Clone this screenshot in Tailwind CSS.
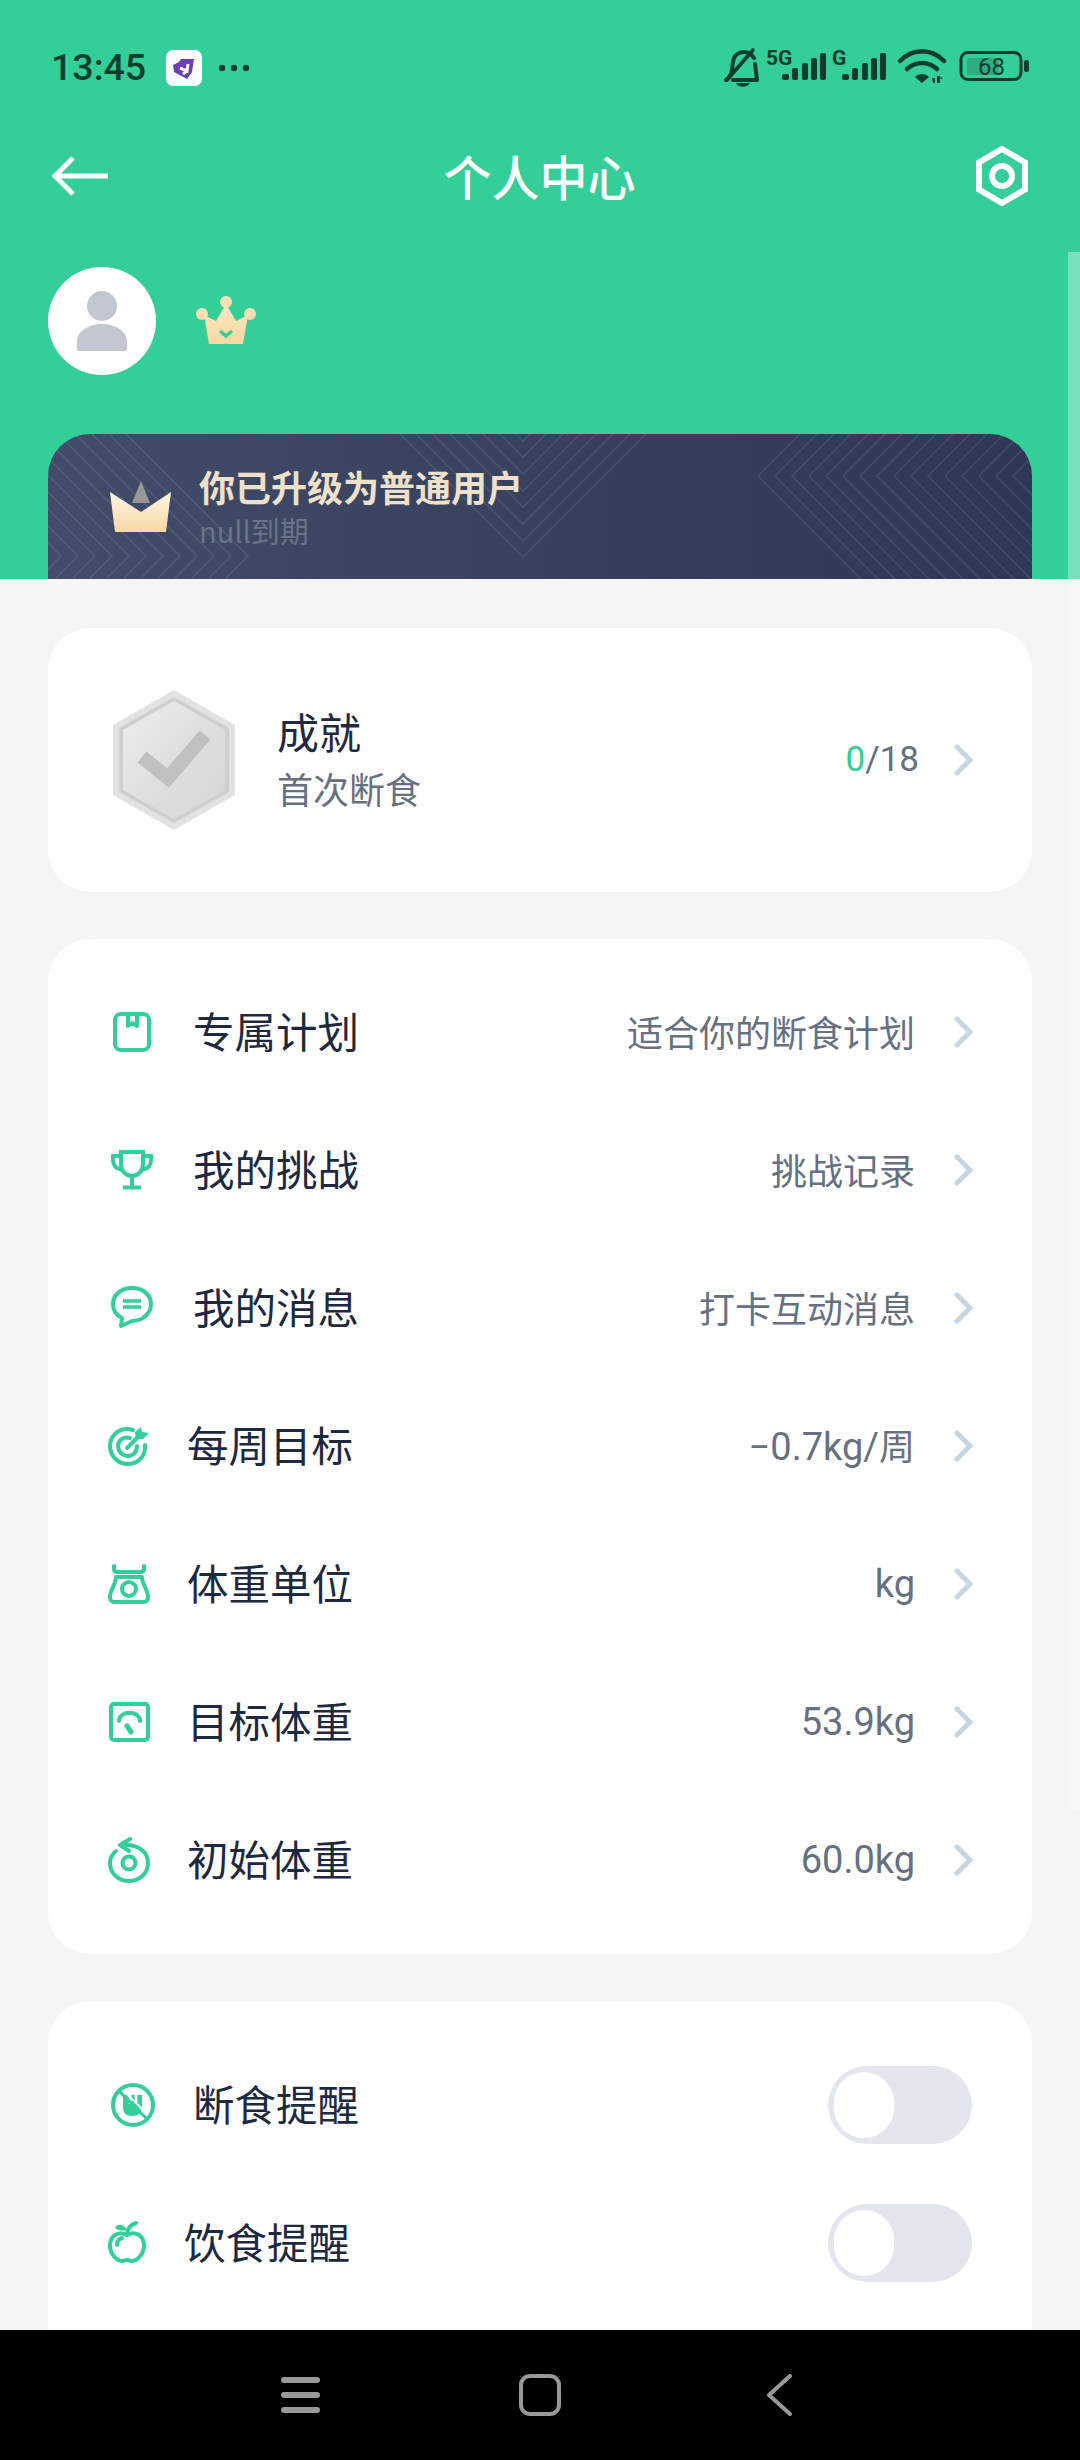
<!DOCTYPE html>
<html><head><meta charset="utf-8"><script src="https://cdn.jsdelivr.net/npm/@tailwindcss/browser@4"></script></head>
<body>
<div class="relative w-[1080px] h-[2460px] overflow-hidden bg-[#f5f5f6] flex flex-col font-['Roboto','Noto_Sans_CJK_SC',sans-serif]">
  <!-- header -->
  <header class="h-[579px] shrink-0 bg-[#34ce99] flex flex-col">
    <div class="h-[136px] shrink-0 flex items-center pl-[51px] pr-[51px] text-[#0c3d2f]">
      <span class="text-[37.500px] leading-none font-medium">13:45</span>
      <svg class="ml-[20px]" width="36" height="36" viewBox="0 0 36 36"><rect width="36" height="36" rx="7" fill="#fff"/><path d="M7 15 L13 12 L15 9 L28 9 L26 22 L21 29 L8 22Z" fill="#6d3fb5"/><path d="M14 18 L21 21 L22 14 M21 21 L17 24" stroke="#fff" stroke-width="3" fill="none"/></svg>
      <svg class="ml-[16px]" width="32" height="8" viewBox="0 0 32 8" fill="#0c3d2f"><circle cx="4" cy="4" r="3.2"/><circle cx="16" cy="4" r="3.2"/><circle cx="28" cy="4" r="3.2"/></svg>
      <svg class="ml-auto" width="305" height="50" viewBox="724 45 305 50">
        <g fill="none" stroke="#0c3d2f" stroke-width="4" stroke-linecap="round" stroke-linejoin="round">
          <path d="M726 82 C733 77 732 70 733 64 C734 57 739 54 744 54 C749 54 752 57 754 60 M755 66 L757 82 L733 82"/>
          <path d="M727 82 L753 52" stroke-width="3.6"/>
        </g>
        <path d="M736 85 L750 85 C748 90 738 90 736 85Z" fill="#0c3d2f"/>
        <text x="766" y="67" font-size="21" font-weight="700" font-family="Roboto" fill="#0c3d2f">5G</text>
        <text x="832" y="67" font-size="21" font-weight="700" font-family="Roboto" fill="#0c3d2f">G</text>
        <g fill="#0c3d2f">
          <rect x="782" y="76" width="7" height="6" rx="2"/><rect x="792" y="70" width="6" height="12" rx="2"/><rect x="802" y="65" width="6" height="17" rx="2"/><rect x="811" y="60" width="6" height="22" rx="2"/><rect x="820" y="55" width="6" height="27" rx="2"/>
          <rect x="842" y="76" width="7" height="6" rx="2"/><rect x="852" y="70" width="6" height="12" rx="2"/><rect x="862" y="65" width="6" height="17" rx="2"/><rect x="871" y="60" width="6" height="22" rx="2"/><rect x="880" y="55" width="6" height="27" rx="2"/>
          <path d="M915 79 L922 85 L929 79 C925 75 919 75 915 79Z"/>
          <path d="M932 80 L935 80 L935 85 L933 85Z M937 78 L940 78 L940 85 L937 85Z M940 78 L943 81 L941 81Z"/>
        </g>
        <g fill="none" stroke="#0c3d2f" stroke-width="4.500" stroke-linecap="round">
          <path d="M900 63 C913 50 931 50 944 63"/><path d="M907 71 C916 63 928 63 937 71"/>
        </g>
        <rect x="961" y="54.500" width="60" height="27" rx="7" fill="none" stroke="#0c3d2f" stroke-width="3"/>
        <rect x="967" y="60" width="32" height="17" rx="2" fill="#2bae82"/>
        <rect x="1024" y="62" width="5" height="12" rx="2.500" fill="#0c3d2f"/>
        <text x="978" y="77" font-size="24" font-family="Roboto" fill="#0c3d2f">68</text>
      </svg>
    </div>
    <div class="h-[82px] shrink-0 flex items-center justify-between pl-[51px] pr-[52px] -mt-[1px]">
      <svg width="58" height="40" viewBox="0 0 58 40" fill="none" stroke="#fff" stroke-width="5"><path d="M57 20 L4 20 M22 2 L4 20 L22 38"/></svg>
      <h1 class="mr-[6px] pb-[3px] text-[48px] leading-none font-medium text-white font-['Noto_Sans_CJK_SC']">个人中心</h1>
      <svg width="52" height="60" viewBox="0 0 52 60" fill="none" stroke="#fff"><path d="M26 3 L49 16.500 L49 43.500 L26 57 L3 43.500 L3 16.500Z" stroke-width="6"/><circle cx="26" cy="30" r="10" stroke-width="6"/></svg>
    </div>
    <div class="flex items-center pl-[48px] mt-[50px] h-[108px] shrink-0">
      <div class="w-[108px] h-[108px] rounded-full bg-white flex items-center justify-center">
        <svg width="52" height="60" viewBox="0 0 52 60" fill="#c2c7d1"><circle cx="26" cy="15" r="15"/><path d="M2 60 C0 58 1 53 1 50 C1 40 13 33 26 33 C39 33 51 40 51 50 C51 53 52 58 50 60 Z"/></svg>
      </div>
      <svg class="ml-[39px]" width="62" height="50" viewBox="0 0 62 50">
        <defs><linearGradient id="cg" x1="0" y1="0" x2="0" y2="1"><stop offset="0" stop-color="#fbe6c2"/><stop offset="1" stop-color="#f9d8a3"/></linearGradient></defs>
        <g fill="url(#cg)"><circle cx="7" cy="18" r="6"/><circle cx="31" cy="6" r="6"/><circle cx="55" cy="18" r="6"/><path d="M9 19 L21 25 L31 8 L41 25 L53 19 L48 48 L14 48Z"/></g>
        <path d="M25 35 L31 40 L37 35" fill="none" stroke="#34ce99" stroke-width="3.500"/>
      </svg>
    </div>
    <div class="relative mx-[48px] mt-[59px] h-[145px] shrink-0 rounded-t-[42px] overflow-hidden bg-gradient-to-r from-[#414c68] to-[#2e3755]">
      <svg class="absolute inset-0" width="984" height="145" viewBox="0 0 984 145" fill="none" stroke="#fff" stroke-opacity=".08" stroke-width="2">
        <defs>
          <path id="a" d="M78 0 L200 122 L178 144"/>
          <path id="b" d="M335 -140 L475 0 L615 -140"/>
          <path id="c" d="M760 -8 L710 42 L820 152"/>
        </defs>
        <use href="#a"/><use href="#a" x="-17"/><use href="#a" x="-34"/><use href="#a" x="-51"/><use href="#a" x="-68"/><use href="#a" x="-85"/><use href="#a" x="-102"/><use href="#a" x="-119"/><use href="#a" x="-136"/><use href="#a" x="-153"/><use href="#a" x="-170"/><use href="#a" x="-187"/>
        <use href="#b" y="123"/><use href="#b" y="107"/><use href="#b" y="90"/><use href="#b" y="73"/><use href="#b" y="57"/><use href="#b" y="40"/><use href="#b" y="23"/><use href="#b" y="7"/>
        <use href="#c"/><use href="#c" x="17"/><use href="#c" x="34"/><use href="#c" x="51"/><use href="#c" x="68"/><use href="#c" x="85"/><use href="#c" x="102"/><use href="#c" x="119"/><use href="#c" x="136"/><use href="#c" x="153"/><use href="#c" x="170"/><use href="#c" x="187"/><use href="#c" x="204"/><use href="#c" x="221"/><use href="#c" x="238"/><use href="#c" x="255"/>
      </svg>
      <div class="relative flex items-start pl-[62px] pt-[30px]">
        <svg class="mt-[17px]" width="62" height="52" viewBox="0 0 62 52">
          <defs><linearGradient id="cb" x1="0" y1="0" x2="0" y2="1"><stop offset="0" stop-color="#fff6e6"/><stop offset="1" stop-color="#f9d7a2"/></linearGradient></defs>
          <path d="M31 0 L22 22 L40 22Z" fill="#9a9894"/>
          <path d="M0 11 L31 31 L61 11 L56 51 L5 51Z" fill="url(#cb)"/>
        </svg>
        <div class="ml-[27px] flex flex-col">
          <span class="text-[36px] leading-[44px] font-bold text-[#efe0c9] font-['Noto_Sans_CJK_SC']">你已升级为普通用户</span>
          <span class="text-[29px] leading-[36px] mt-[4px] text-[#6c7386] font-['Noto_Sans_CJK_SC']">null到期</span>
        </div>
      </div>
    </div>
  </header>

  <main class="flex-1 min-h-0 overflow-hidden px-[48px] pt-[49px] flex flex-col gap-[47px]">
    <!-- achievement -->
    <section class="h-[264px] shrink-0 bg-white rounded-[42px] flex items-center pl-[65px] pr-[57px]">
      <svg width="122" height="140" viewBox="0 0 122 140">
        <defs><linearGradient id="hx" x1="0" y1="0" x2="1" y2="1"><stop offset="0" stop-color="#eeeeee"/><stop offset=".5" stop-color="#dfdfdf"/><stop offset="1" stop-color="#d6d6d6"/></linearGradient></defs>
        <path d="M61 0 L122 35 L122 105 L61 140 L0 105 L0 35Z" fill="#e2e2e2"/>
        <path d="M61 7 L116 38 L116 102 L61 133 L6 102 L6 38Z" fill="#cfcfcf"/>
        <path d="M61 11 L112 40 L112 100 L61 129 L10 100 L10 40Z" fill="url(#hx)"/>
        <path d="M29 67 L55 88 L92 45" fill="none" stroke="#c0c0c0" stroke-width="14"/>
      </svg>
      <div class="ml-[42px] pb-[4px] flex flex-col font-['Noto_Sans_CJK_SC']">
        <span class="text-[42px] leading-[54px] text-[#1e2940]">成就</span>
        <span class="text-[36px] leading-[50px] mt-[5px] text-[#667080]">首次断食</span>
      </div>
      <span class="ml-auto text-[35px] text-[#667080]"><span class="text-[#34ce99]">0</span>/18</span>
      <svg class="ml-[34px]" width="22" height="32" viewBox="0 0 22 32" fill="none" stroke="#c5d6e2" stroke-width="5" stroke-linecap="round"><path d="M4 3 L17 16 L4 29"/></svg>
    </section>

    <!-- settings list -->
    <section class="h-[1015px] shrink-0 bg-white rounded-[42px] py-[24px] flex flex-col">
      <div class="h-[138px] shrink-0 flex items-center pr-[57px]">
        <svg class="ml-[65px]" width="38" height="40" viewBox="0 0 38 40" fill="none" stroke="#34ce99" stroke-width="4" stroke-linejoin="round"><rect x="2" y="2" width="34" height="36" rx="6"/><path d="M15 2 L15 14 L19 11 L24 14 L24 2"/></svg>
        <span class="ml-[42px] pb-[3px] text-[41.500px] text-[#1e2940] font-['Noto_Sans_CJK_SC']">专属计划</span>
        <span class="ml-auto pb-[2px] text-[36px] text-[#667080] font-['Noto_Sans_CJK_SC']">适合你的断食计划</span>
        <svg class="ml-[38px]" width="22" height="32" viewBox="0 0 22 32" fill="none" stroke="#c5d6e2" stroke-width="5" stroke-linecap="round"><path d="M4 3 L17 16 L4 29"/></svg>
      </div>
      <div class="h-[138px] shrink-0 flex items-center pr-[57px]">
        <svg class="ml-[63px]" width="42" height="40" viewBox="0 0 42 40" fill="none" stroke="#34ce99" stroke-width="4"><path d="M10 2 L32 2 L32 14 C32 21 27 26 21 26 C15 26 10 21 10 14Z"/><path d="M10 6 L2 6 L2 10 C2 16 6 19 11 20 M32 6 L40 6 L40 10 C40 16 36 19 31 20"/><path d="M21 26 L21 37 M12 37.500 L30 37.500"/></svg>
        <span class="ml-[40px] pb-[3px] text-[41.500px] text-[#1e2940] font-['Noto_Sans_CJK_SC']">我的挑战</span>
        <span class="ml-auto pb-[2px] text-[36px] text-[#667080] font-['Noto_Sans_CJK_SC']">挑战记录</span>
        <svg class="ml-[38px]" width="22" height="32" viewBox="0 0 22 32" fill="none" stroke="#c5d6e2" stroke-width="5" stroke-linecap="round"><path d="M4 3 L17 16 L4 29"/></svg>
      </div>
      <div class="h-[138px] shrink-0 flex items-center pr-[57px]">
        <svg class="ml-[63px] -mt-[3px]" width="42" height="42" viewBox="0 0 42 42" fill="none" stroke="#34ce99" stroke-width="4" stroke-linejoin="round"><path d="M21 2 C32 2 40 9 40 18 C40 27 32 35 21 35 L10 40 L11 32 C5 29 2 24 2 18 C2 9 10 2 21 2Z"/><path d="M12 15 L30 15 M12 21 L30 21" stroke-width="3.500"/></svg>
        <span class="ml-[40px] pb-[3px] text-[41.500px] text-[#1e2940] font-['Noto_Sans_CJK_SC']">我的消息</span>
        <span class="ml-auto pb-[2px] text-[36px] text-[#667080] font-['Noto_Sans_CJK_SC']">打卡互动消息</span>
        <svg class="ml-[38px]" width="22" height="32" viewBox="0 0 22 32" fill="none" stroke="#c5d6e2" stroke-width="5" stroke-linecap="round"><path d="M4 3 L17 16 L4 29"/></svg>
      </div>
      <div class="h-[138px] shrink-0 flex items-center pr-[57px]">
        <svg class="ml-[60px]" width="42" height="40" viewBox="0 0 42 40" fill="none" stroke="#34ce99" stroke-width="4" stroke-linecap="round"><path d="M25 4 C23 3.500 21 3 19 3 C9 3 2 11 2 20 C2 30 10 38 20 38 C30 38 38 30 37 19"/><path d="M22 12 C15 10 10 15 10 20 C10 26 15 30 20 30 C25 30 29 26 29 20"/><path d="M19 22 L30 11"/><path d="M27 6 L33 1 L34 6 L41 7 L35 13 L28 13Z" fill="#34ce99" stroke="none"/></svg>
        <span class="ml-[37px] pb-[3px] text-[41.500px] text-[#1e2940] font-['Noto_Sans_CJK_SC']">每周目标</span>
        <span class="ml-auto flex items-baseline text-[38px] text-[#667080]">−0.7kg/<span class="text-[36px] font-['Noto_Sans_CJK_SC']">周</span></span>
        <svg class="ml-[38px]" width="22" height="32" viewBox="0 0 22 32" fill="none" stroke="#c5d6e2" stroke-width="5" stroke-linecap="round"><path d="M4 3 L17 16 L4 29"/></svg>
      </div>
      <div class="h-[138px] shrink-0 flex items-center pr-[57px]">
        <svg class="ml-[60px]" width="42" height="40" viewBox="0 0 42 40" fill="none" stroke="#34ce99" stroke-width="4" stroke-linecap="round" stroke-linejoin="round"><path d="M6 2 L6 5 C6 7 7 8 9 8 L33 8 C35 8 36 7 36 5 L36 2"/><path d="M8 13 L34 13 C34 20 40 26 40 33 C40 36 38 38 36 38 L6 38 C4 38 2 36 2 33 C2 26 8 20 8 13Z"/><circle cx="21" cy="25" r="7"/></svg>
        <span class="ml-[37px] pb-[3px] text-[41.500px] text-[#1e2940] font-['Noto_Sans_CJK_SC']">体重单位</span>
        <span class="ml-auto text-[38px] text-[#667080]">kg</span>
        <svg class="ml-[38px]" width="22" height="32" viewBox="0 0 22 32" fill="none" stroke="#c5d6e2" stroke-width="5" stroke-linecap="round"><path d="M4 3 L17 16 L4 29"/></svg>
      </div>
      <div class="h-[138px] shrink-0 flex items-center pr-[57px]">
        <svg class="ml-[61px]" width="41" height="40" viewBox="0 0 41 40" fill="none" stroke="#34ce99" stroke-width="4" stroke-linecap="round"><rect x="2" y="2" width="37" height="36" rx="3"/><path d="M10 19 C10 8 31 8 31 19"/><path d="M18 24 L22 30" stroke-width="5"/></svg>
        <span class="ml-[37px] pb-[3px] text-[41.500px] text-[#1e2940] font-['Noto_Sans_CJK_SC']">目标体重</span>
        <span class="ml-auto text-[38px] text-[#667080]">53.9kg</span>
        <svg class="ml-[38px]" width="22" height="32" viewBox="0 0 22 32" fill="none" stroke="#c5d6e2" stroke-width="5" stroke-linecap="round"><path d="M4 3 L17 16 L4 29"/></svg>
      </div>
      <div class="h-[138px] shrink-0 flex items-center pr-[57px]">
        <svg class="ml-[60px]" width="42" height="46" viewBox="0 0 42 46" fill="none" stroke="#34ce99" stroke-width="4" stroke-linecap="round" stroke-linejoin="round"><path d="M8 14 C2 19 2 24 2 26 C2 36 10 44 21 44 C32 44 40 36 40 26 C40 16 32 8 18 8"/><path d="M22 2 L12 8 L21 14"/><circle cx="21" cy="26" r="6.500"/></svg>
        <span class="ml-[37px] pb-[3px] text-[41.500px] text-[#1e2940] font-['Noto_Sans_CJK_SC']">初始体重</span>
        <span class="ml-auto text-[38px] text-[#667080]">60.0kg</span>
        <svg class="ml-[38px]" width="22" height="32" viewBox="0 0 22 32" fill="none" stroke="#c5d6e2" stroke-width="5" stroke-linecap="round"><path d="M4 3 L17 16 L4 29"/></svg>
      </div>
    </section>

    <!-- reminders -->
    <section class="shrink-0 h-[400px] bg-white rounded-t-[42px] pt-[35px] flex flex-col">
      <div class="h-[138px] shrink-0 flex items-center pr-[60px]">
        <svg class="ml-[63px]" width="44" height="44" viewBox="0 0 44 44" fill="none" stroke="#34ce99" stroke-width="4"><circle cx="22" cy="22" r="20"/><path d="M12 12 L31 12 L31 24 C31 30 27 33 21 33 C15 33 12 30 12 24Z" fill="#34ce99" stroke="none"/><path d="M19 10 L19 21 M25 10 L25 21" stroke="#fff" stroke-width="2.500"/><path d="M12 7 L37 32" stroke="#fff" stroke-width="2"/><path d="M9 9 L35 35" stroke-width="3"/></svg>
        <span class="ml-[38px] pb-[3px] text-[41.500px] text-[#1e2940] font-['Noto_Sans_CJK_SC']">断食提醒</span>
        <div class="ml-auto w-[144px] h-[78px] rounded-full bg-[#e3e6ef] pl-[6px] flex items-center"><div class="w-[60px] h-[66px] rounded-full bg-white"></div></div>
      </div>
      <div class="h-[138px] shrink-0 flex items-center pr-[60px]">
        <svg class="ml-[60px] -mt-[3px]" width="38" height="42" viewBox="0 0 38 42" fill="none" stroke="#34ce99" stroke-width="4" stroke-linecap="round"><path d="M19 14 C12 10 2 13 2 25 C2 33 9 40 14 40 C17 40 17 39 19 39 C21 39 22 40 24 40 C29 40 36 33 36 25 C36 13 26 10 19 14Z"/><path d="M19 14 C19 8 22 4 28 2"/><path d="M7 6 C11 2 16 4 19 9 C14 10 9 10 7 6Z" fill="#34ce99" stroke="none"/><path d="M9 24 C9 20 11 18 14 17"/></svg>
        <span class="ml-[38px] pb-[3px] text-[41.500px] text-[#1e2940] font-['Noto_Sans_CJK_SC']">饮食提醒</span>
        <div class="ml-auto w-[144px] h-[78px] rounded-full bg-[#e3e6ef] pl-[6px] flex items-center"><div class="w-[60px] h-[66px] rounded-full bg-white"></div></div>
      </div>
    </section>
  </main>

  <nav class="relative h-[130px] shrink-0 bg-black flex items-center pl-[281px]">
    <svg width="40" height="36" viewBox="0 0 40 36" fill="#999"><rect width="39" height="6" y="0" rx="3"/><rect width="39" height="6" y="15" rx="3"/><rect width="39" height="6" y="30" rx="3"/></svg>
    <svg class="ml-[198px]" width="42" height="42" viewBox="0 0 42 42" fill="none" stroke="#999" stroke-width="4"><rect x="2" y="2" width="38" height="38" rx="9"/></svg>
    <svg class="ml-[205px]" width="26" height="42" viewBox="0 0 26 42" fill="none" stroke="#999" stroke-width="4" stroke-linecap="round" stroke-linejoin="round"><path d="M24 2 L3 21 L24 40"/></svg>
  </nav>

  <div class="absolute right-0 top-[252px] w-[12px] h-[1558px] bg-white/35"></div>
</div>
</body></html>
